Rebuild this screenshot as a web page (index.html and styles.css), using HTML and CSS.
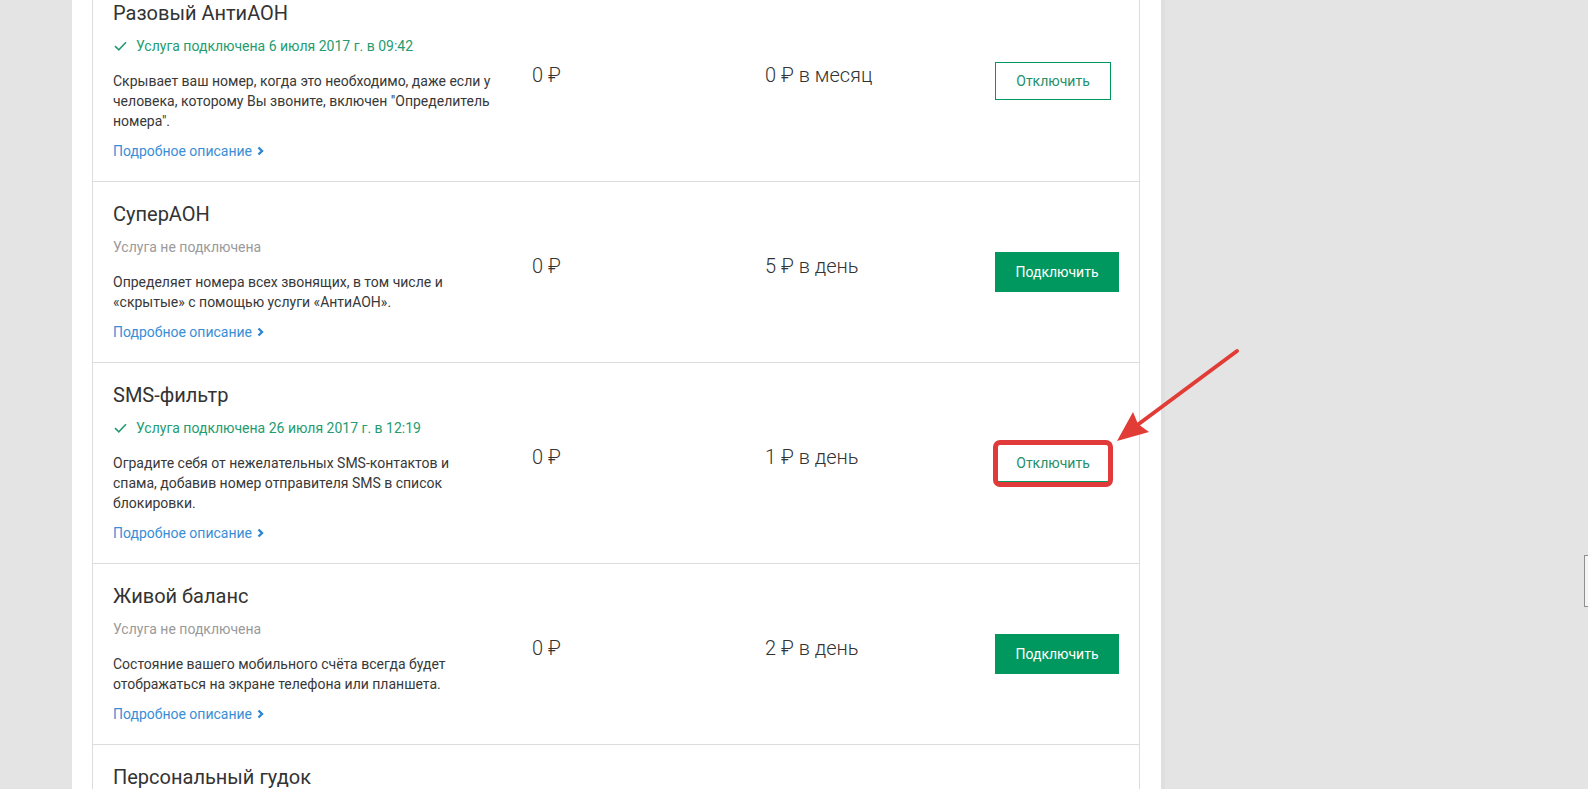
FILE: index.html
```html
<!DOCTYPE html>
<html lang="ru">
<head>
<meta charset="utf-8">
<title>Услуги</title>
<link rel="stylesheet" href="styles.css">
</head>
<body>
<div class="page">
  <div class="side-left"></div>
  <main class="main">
    <div class="card">
      <section class="item">
        <div class="info">
          <h3 class="title">Разовый АнтиАОН</h3>
          <p class="status on"><svg class="check" viewBox="0 0 13 10" width="13" height="10"><path d="M1 5.2l3.8 3.6L12 1.2"/></svg>Услуга подключена 6 июля 2017 г. в 09:42</p>
          <p class="desc">Скрывает ваш номер, когда это необходимо, даже если у человека, которому Вы звоните, включен "Определитель номера".</p>
          <a class="more" href="#">Подробное описание<svg class="chev" viewBox="0 0 7 10" width="7" height="10"><path d="M1.5 1.5l3.5 3.5-3.5 3.5"/></svg></a>
        </div>
        <div class="price">0 ₽</div>
        <div class="price">0 ₽ в месяц</div>
        <div class="action"><button class="btn btn-outline">Отключить</button></div>
      </section>

      <section class="item">
        <div class="info">
          <h3 class="title">СуперАОН</h3>
          <p class="status off">Услуга не подключена</p>
          <p class="desc">Определяет номера всех звонящих, в том числе и «скрытые» с помощью услуги «АнтиАОН».</p>
          <a class="more" href="#">Подробное описание<svg class="chev" viewBox="0 0 7 10" width="7" height="10"><path d="M1.5 1.5l3.5 3.5-3.5 3.5"/></svg></a>
        </div>
        <div class="price">0 ₽</div>
        <div class="price">5 ₽ в день</div>
        <div class="action"><button class="btn btn-fill">Подключить</button></div>
      </section>

      <section class="item">
        <div class="info">
          <h3 class="title">SMS-фильтр</h3>
          <p class="status on"><svg class="check" viewBox="0 0 13 10" width="13" height="10"><path d="M1 5.2l3.8 3.6L12 1.2"/></svg>Услуга подключена 26 июля 2017 г. в 12:19</p>
          <p class="desc">Оградите себя от нежелательных SMS-контактов и спама, добавив номер отправителя SMS в список блокировки.</p>
          <a class="more" href="#">Подробное описание<svg class="chev" viewBox="0 0 7 10" width="7" height="10"><path d="M1.5 1.5l3.5 3.5-3.5 3.5"/></svg></a>
        </div>
        <div class="price">0 ₽</div>
        <div class="price">1 ₽ в день</div>
        <div class="action"><span class="marked"><button class="btn btn-outline">Отключить</button><span class="red-box"></span></span></div>
      </section>

      <section class="item">
        <div class="info">
          <h3 class="title">Живой баланс</h3>
          <p class="status off">Услуга не подключена</p>
          <p class="desc">Состояние вашего мобильного счёта всегда будет отображаться на экране телефона или планшета.</p>
          <a class="more" href="#">Подробное описание<svg class="chev" viewBox="0 0 7 10" width="7" height="10"><path d="M1.5 1.5l3.5 3.5-3.5 3.5"/></svg></a>
        </div>
        <div class="price">0 ₽</div>
        <div class="price">2 ₽ в день</div>
        <div class="action"><button class="btn btn-fill">Подключить</button></div>
      </section>

      <section class="item">
        <div class="info">
          <h3 class="title">Персональный гудок</h3>
        </div>
      </section>
    </div>
  </main>
  <div class="side-right"><span class="scroll-thumb"></span></div>
</div>
<svg class="arrow" viewBox="0 0 1588 789" width="1588" height="789">
  <line x1="1237" y1="351" x2="1136" y2="426"/>
  <polygon points="1117,441 1133,412 1138,424 1149,432"/>
</svg>
</body>
</html>
```

FILE: styles.css
```css
* { box-sizing: border-box; }

html, body {
  margin: 0;
  padding: 0;
  height: 789px;
  overflow: hidden;
}

body {
  background: #e4e4e4;
  font-family: "Roboto", "Liberation Sans", sans-serif;
  color: #333;
  position: relative;
}

.page {
  display: flex;
  height: 789px;
}

.side-left {
  width: 72px;
  flex: none;
  background: #e4e4e4;
}

.main {
  width: 1089px;
  flex: none;
  background: #fff;
  padding: 0 21px 0 20px;
  overflow: hidden;
}

.side-right {
  flex: 1;
  background: #e4e4e4;
  border-left: 4px solid #dfdfdf;
  position: relative;
}

.scroll-thumb {
  position: absolute;
  right: 0;
  top: 555px;
  width: 4px;
  height: 52px;
  border: 1px solid #8f8f8f;
  border-right: none;
  background: #f4f4f4;
}

.card {
  margin-top: -20px;
  border: 1px solid #dcdcdc;
  background: #fff;
}

.item {
  display: grid;
  grid-template-columns: 419px 233px 230px 1fr;
  align-items: center;
  padding: 20px;
  border-bottom: 1px solid #dcdcdc;
}

.info {
  display: flex;
  flex-direction: column;
  align-items: flex-start;
}

.title {
  margin: 0 0 11px;
  font-size: 20px;
  line-height: 24px;
  font-weight: 400;
  color: #333;
}

.status {
  margin: 0 0 15px;
  font-size: 14px;
  line-height: 20px;
  display: flex;
  align-items: center;
}

.status.on { color: #259b70; }
.status.off { color: #9a9a9a; }

.check {
  margin: 0 9px 0 1px;
  fill: none;
  stroke: #259b70;
  stroke-width: 1.6;
}

.desc {
  margin: 0 0 10px;
  width: 380px;
  font-size: 14px;
  line-height: 20px;
  color: #383838;
}

.more {
  font-size: 14px;
  line-height: 20px;
  color: #3a8ed6;
  text-decoration: none;
  display: inline-flex;
  align-items: center;
}

.chev {
  margin-left: 5px;
  fill: none;
  stroke: #2f86d0;
  stroke-width: 2.4;
}

.price {
  font-size: 20px;
  line-height: 24px;
  font-weight: 300;
  color: #333;
  padding-bottom: 12px;
}

.action {
  display: flex;
  align-items: center;
}

.btn {
  font-family: "Roboto", "Liberation Sans", sans-serif;
  font-size: 14px;
  cursor: pointer;
  border-radius: 0;
}

.btn-outline {
  width: 116px;
  height: 38px;
  background: #fff;
  color: #23906a;
  border: 1px solid #00985f;
}

.btn-fill {
  width: 124px;
  height: 40px;
  background: #00985f;
  color: #fff;
  border: none;
}

.marked {
  position: relative;
  display: inline-flex;
}

.red-box {
  position: absolute;
  left: -2px;
  right: -2px;
  top: -4px;
  bottom: -5px;
  border: 5px solid #e03a3a;
  border-radius: 7px;
}

.arrow {
  position: absolute;
  left: 0;
  top: 0;
  pointer-events: none;
}

.arrow line {
  stroke: #e23c37;
  stroke-width: 4;
  stroke-linecap: round;
}

.arrow polygon {
  fill: #e23c37;
}
```
